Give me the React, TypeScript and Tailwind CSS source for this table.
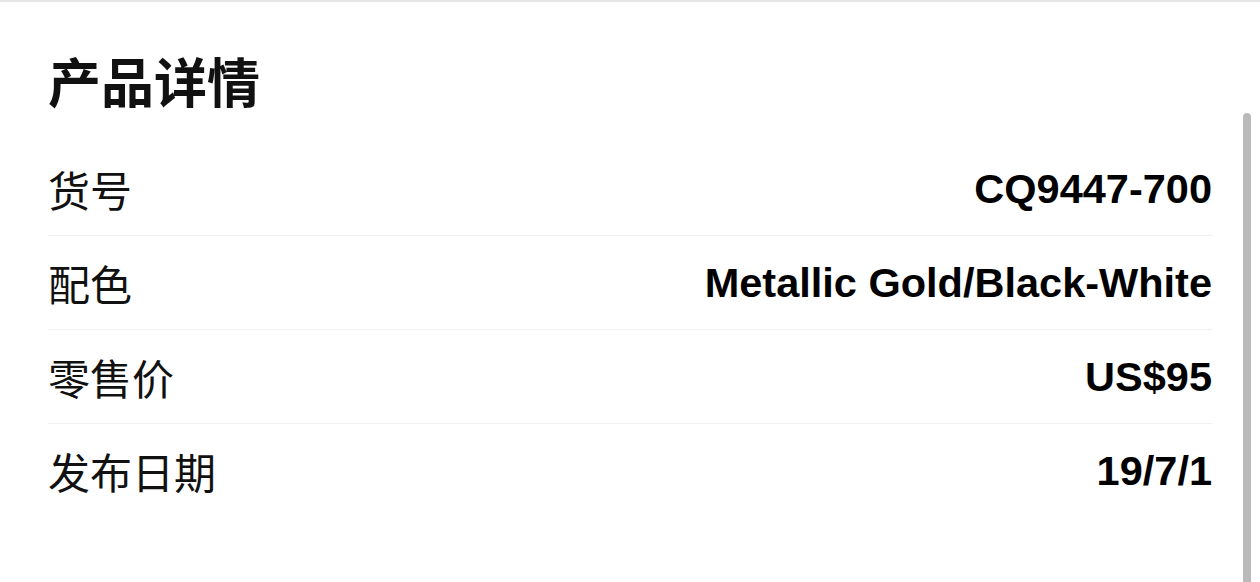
import React from "react";

const rows = [
  { label: "货号", value: "CQ9447-700" },
  { label: "配色", value: "Metallic Gold/Black-White" },
  { label: "零售价", value: "US$95" },
  { label: "发布日期", value: "19/7/1" },
];

export default function App() {
  return (
    <div className="relative w-[1260px] h-[582px] overflow-hidden bg-white border-t-2 border-[#e6e6e6]">
      <div className="px-12 pt-[48px]">
        <h1
          className="text-[53px] leading-[60px] font-bold text-[#111]"
          style={{ fontFamily: '"Noto Sans CJK SC", "Noto Sans", sans-serif' }}
        >
          产品详情
        </h1>
        <div className="mt-[32px]">
          {rows.map((r, i) => (
            <div
              key={r.label}
              className={
                "flex items-center justify-between h-[94px] " +
                (i < rows.length - 1 ? "border-b border-[#f1f1f1]" : "")
              }
            >
              <span
                className="text-[42px] leading-none text-[#111]"
                style={{ fontFamily: '"Noto Sans CJK SC", "Noto Sans", sans-serif' }}
              >
                {r.label}
              </span>
              <span
                className="text-[41.5px] leading-none font-bold text-black"
                style={{ fontFamily: '"Liberation Sans", Arial, sans-serif' }}
              >
                {r.value}
              </span>
            </div>
          ))}
        </div>
      </div>
      <div className="absolute right-[9px] top-[111px] bottom-0 w-[8px] rounded-t-full bg-[#bababa]" />
    </div>
  );
}
